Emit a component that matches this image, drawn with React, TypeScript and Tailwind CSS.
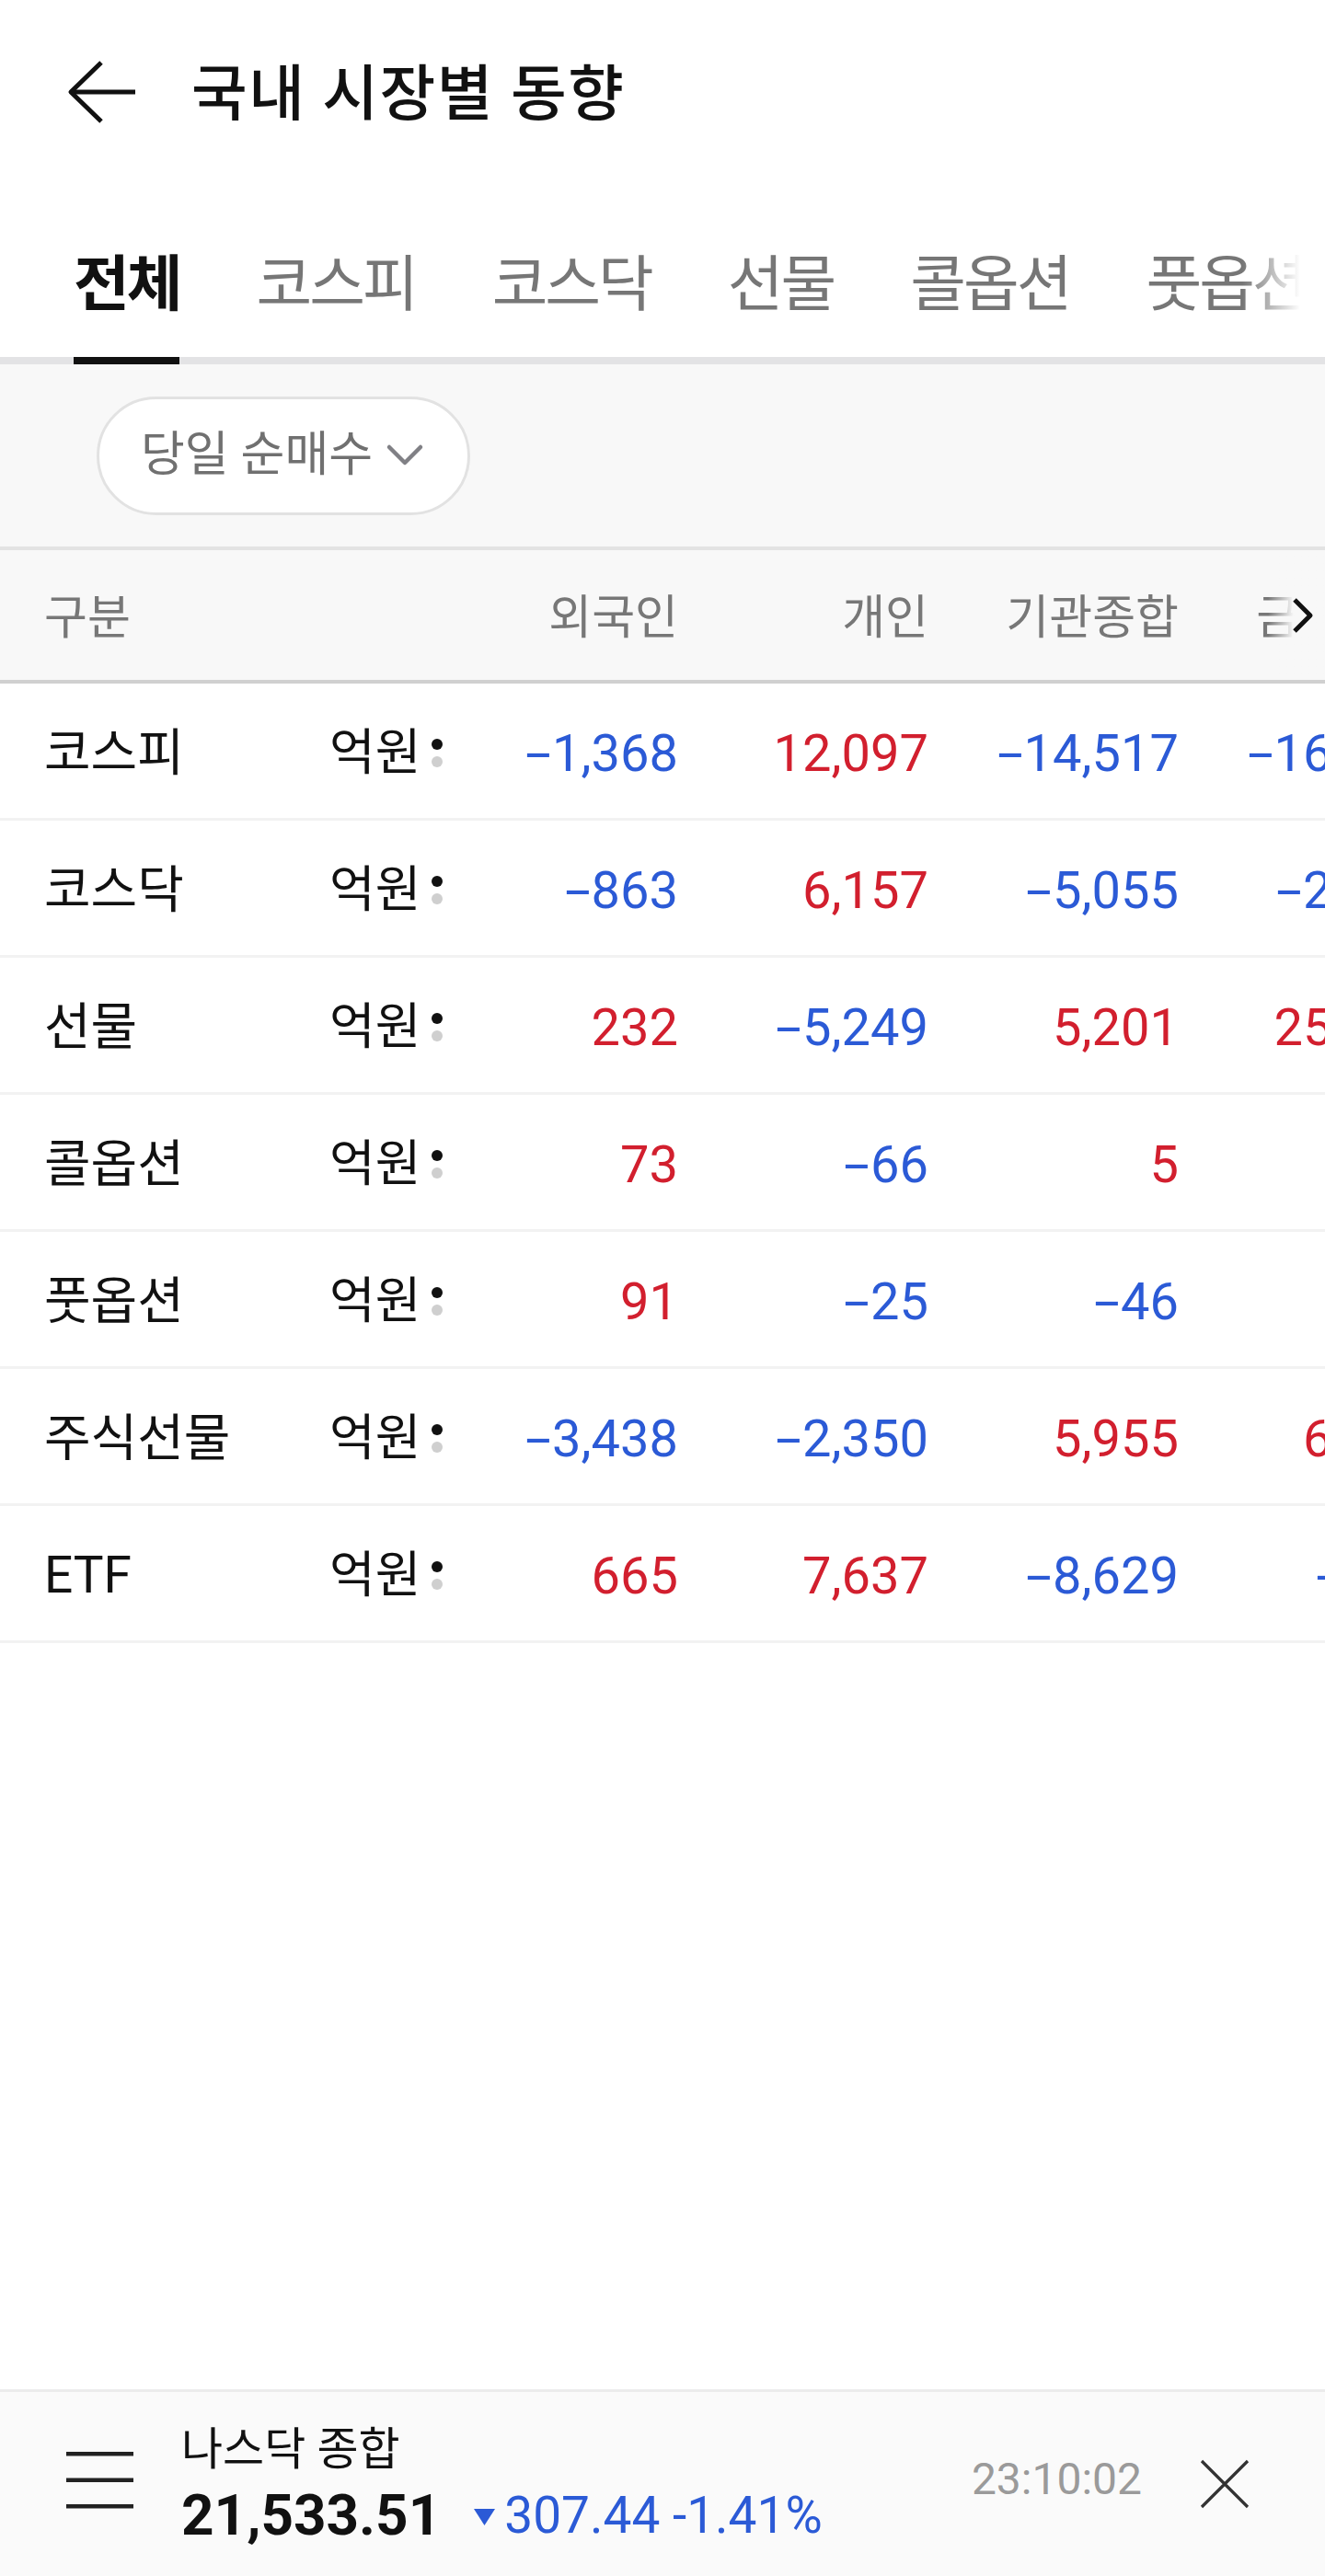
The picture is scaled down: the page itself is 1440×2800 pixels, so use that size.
import React from "react";

type Row = { label: string; vals: string[] };

const rows: Row[] = [
  { label: "코스피", vals: ["-1,368", "12,097", "-14,517", "-16,231"] },
  { label: "코스닥", vals: ["-863", "6,157", "-5,055", "-2,471"] },
  { label: "선물", vals: ["232", "-5,249", "5,201", "25,436"] },
  { label: "콜옵션", vals: ["73", "-66", "5", "12"] },
  { label: "풋옵션", vals: ["91", "-25", "-46", "-8"] },
  { label: "주식선물", vals: ["-3,438", "-2,350", "5,955", "6,212"] },
  { label: "ETF", vals: ["665", "7,637", "-8,629", "-971"] },
];

const tabs = ["전체", "코스피", "코스닥", "선물", "콜옵션", "풋옵션", "주식선물", "ETF"];

function Num({ v }: { v: string }) {
  if (v.startsWith("-")) {
    return (
      <>
        <span className="inline-block w-[29px] text-left">
          <span className="inline-block origin-left scale-x-[1.8]">-</span>
        </span>
        {v.slice(1)}
      </>
    );
  }
  return <>{v}</>;
}

export default function App() {
  return (
    <div className="w-[1440px] h-[2800px] overflow-hidden flex flex-col bg-white font-['Roboto','Noto_Sans_CJK_KR',sans-serif] text-[#111]">
      {/* Header */}
      <div className="h-[200px] shrink-0 flex items-center pl-[73px]">
        <svg width="78" height="70" viewBox="0 0 78 70" fill="none" stroke="#111" strokeWidth="5" strokeLinejoin="round">
          <path d="M4 35 H74" />
          <path d="M37 3 L4 35 L37 67" />
        </svg>
        <span className="ml-[57px] mt-[5px] text-[66px] leading-none tracking-[1.5px] font-medium text-[#111] whitespace-nowrap">
          국내 시장별 동향
        </span>
      </div>

      {/* Tabs */}
      <div className="relative h-[196px] shrink-0 flex items-start border-b-[8px] border-[#e3e3e5] pl-[80px] gap-[83px]">
        {tabs.map((t, i) => (
          <div
            key={t}
            className={
              i === 0
                ? "shrink-0 h-[196px] pt-[77px] border-b-[8px] border-[#111] text-[66px] tracking-[-3px] leading-none whitespace-nowrap font-bold text-[#111]"
                : "shrink-0 h-[196px] pt-[77px] border-b-[8px] border-transparent text-[66px] tracking-[-3px] leading-none whitespace-nowrap text-[#767676]"
            }
          >
            {t}
          </div>
        ))}
        <div className="absolute right-0 top-0 h-[188px] w-[90px] bg-linear-to-r from-white/0 to-white to-70%" />
      </div>

      {/* Filter */}
      <div className="h-[202px] shrink-0 bg-[#f8f8f8] flex items-center pl-[105px] border-b-[4px] border-[#e3e3e3]">
        <div className="h-[129px] w-[406px] rounded-full border-[3px] border-[#e2e2e2] bg-white flex items-center pl-[45px]">
          <span className="text-[52px] leading-none text-[#707070] whitespace-nowrap">당일 순매수</span>
          <svg className="ml-[14px]" width="42" height="26" viewBox="0 0 42 26" fill="none">
            <path d="M4 4 L21 21 L38 4" stroke="#808085" strokeWidth="4.5" strokeLinecap="round" strokeLinejoin="round" />
          </svg>
        </div>
      </div>

      {/* Table header */}
      <div className="relative h-[145px] shrink-0 bg-[#f8f8f8] border-b-[4px] border-[#d0d0d0] flex items-center pt-[6px] pl-[48px] text-[51px] leading-none text-[#777] whitespace-nowrap">
        <div className="w-[442px] shrink-0">구분</div>
        <div className="w-[247px] shrink-0 text-right">외국인</div>
        <div className="w-[272px] shrink-0 text-right">개인</div>
        <div className="w-[272px] shrink-0 text-right">기관종합</div>
        <div className="w-[272px] shrink-0 text-right">금융투자</div>
        <div className="absolute right-0 top-0 h-full w-[62px] bg-linear-to-r from-[#f8f8f8]/0 to-[#f8f8f8] to-45% flex items-center justify-end pr-[9px]">
          <svg width="30" height="44" viewBox="0 0 30 44" fill="none">
            <path d="M6 5 L23 22 L6 39" stroke="#111" strokeWidth="5" strokeLinejoin="round" />
          </svg>
        </div>
      </div>

      {/* Rows */}
      {rows.map((r) => (
        <div
          key={r.label}
          className="h-[149px] shrink-0 border-b-[3px] border-[#f2f2f2] flex items-center pl-[48px] pt-[5px] whitespace-nowrap"
        >
          <div className="w-[310px] shrink-0 text-[55px] leading-none text-[#111]">{r.label}</div>
          <div className="w-[132px] shrink-0 flex items-center">
            <span className="text-[54px] leading-none text-[#111]">억원</span>
            <span className="ml-[12px] flex flex-col gap-[7px]">
              <span className="block w-[12px] h-[12px] rounded-full bg-[#111]" />
              <span className="block w-[12px] h-[12px] rounded-full bg-[#cfcfcf]" />
            </span>
          </div>
          {r.vals.map((v, i) => (
            <div
              key={i}
              className={
                (i === 0 ? "w-[247px] " : "w-[272px] ") +
                "shrink-0 text-right text-[56px] leading-none " +
                (v.startsWith("-") ? "text-[#2b5ad6]" : "text-[#d21f2e]")
              }
            >
              <Num v={v} />
            </div>
          ))}
        </div>
      ))}

      <div className="flex-1" />

      {/* Bottom bar */}
      <div className="h-[203px] shrink-0 border-t-[3px] border-[#ececec] bg-[#fafafa] flex items-center pl-[72px] pr-[81px]">
        <svg className="mb-[8px] shrink-0" width="73" height="62" viewBox="0 0 73 62" fill="#222">
          <rect x="0" y="0" width="73" height="4.5" />
          <rect x="0" y="28.5" width="73" height="4.5" />
          <rect x="0" y="57" width="73" height="4.5" />
        </svg>
        <div className="ml-[52px] mt-[3px] flex flex-col">
          <span className="text-[49px] leading-[58px] text-[#111] whitespace-nowrap">나스닥 종합</span>
          <div className="mt-[6px] flex items-center leading-[72px] whitespace-nowrap">
            <span className="text-[62px] font-bold text-[#111]">21,533.51</span>
            <svg className="ml-[36px] mt-[5px]" width="23" height="18" viewBox="0 0 23 18" fill="#2b5ad6">
              <path d="M0 0 H23 L11.5 18 Z" />
            </svg>
            <span className="ml-[10px] text-[55px] text-[#2b5ad6]">307.44 -1.41%</span>
          </div>
        </div>
        <div className="flex-1" />
        <span className="mb-[10px] text-[48px] leading-none text-[#9a9a9a]">23:10:02</span>
        <svg className="ml-[62px]" width="56" height="56" viewBox="0 0 56 56" fill="none" stroke="#333" strokeWidth="3.2">
          <path d="M3 3 L53 53 M53 3 L3 53" />
        </svg>
      </div>
    </div>
  );
}
